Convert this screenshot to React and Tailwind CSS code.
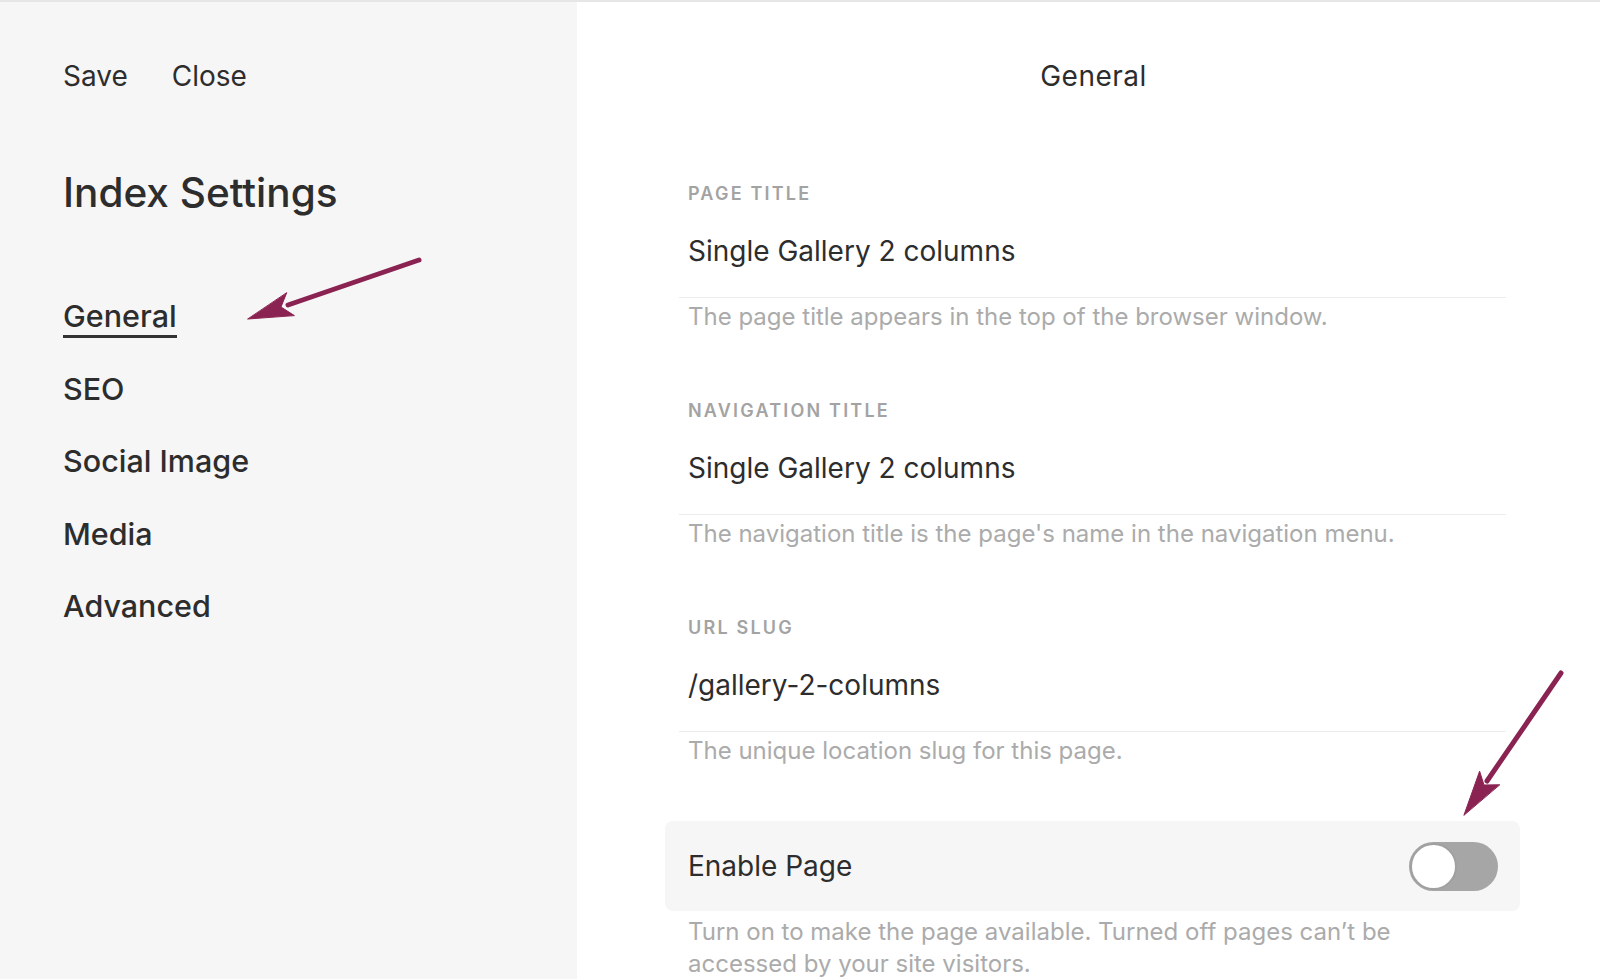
import React from "react";

const fields = [
  {
    label: "PAGE TITLE",
    value: "Single Gallery 2 columns",
    help: "The page title appears in the top of the browser window.",
  },
  {
    label: "NAVIGATION TITLE",
    value: "Single Gallery 2 columns",
    help: "The navigation title is the page's name in the navigation menu.",
  },
  {
    label: "URL SLUG",
    value: "/gallery-2-columns",
    help: "The unique location slug for this page.",
  },
];

const Arrows = () => (
  <svg
    className="pointer-events-none absolute inset-0"
    width="1600"
    height="979"
    viewBox="0 0 1600 979"
  >
    <g fill="#8b2352" stroke="#8b2352" strokeLinecap="round">
      <line x1="419" y1="258" x2="288" y2="303" strokeWidth="5" />
      <polygon points="248,317 294.4,313.6 281,305 286.6,291" strokeWidth="1" />
      <line x1="1561" y1="671" x2="1487" y2="779" strokeWidth="5" />
      <polygon points="1464,813 1479.6,769.2 1484,783 1499.4,782.8" strokeWidth="1" />
    </g>
  </svg>
);

const Toggle = () => (
  <div className="flex h-[49px] w-[89px] items-center rounded-full bg-[#a6a6a6] p-px">
    <div className="h-[47px] w-[47px] rounded-full border-2 border-[#a0a0a0] bg-white" />
  </div>
);

const App = () => {
  return (
    <div className="relative flex h-[979px] w-[1600px] overflow-hidden border-t-2 border-[#e6e6e6] bg-white font-['Inter',sans-serif] text-[#2d2d2d]">
      {/* sidebar */}
      <aside className="w-[577px] shrink-0 bg-[#f6f6f6] pl-[63px] pt-[58px]">
        <div className="flex gap-[44px] text-[28px] leading-[32px]">
          <span>Save</span>
          <span>Close</span>
        </div>
        <h1 className="mt-[77px] text-[40.5px] font-medium leading-[48px]">
          Index Settings
        </h1>
        <nav className="mt-[81px] flex flex-col items-start text-[30.5px] font-medium leading-[36px]">
          <span className="border-b-[3px] border-[#333] pb-[1px]">General</span>
          <span className="mt-[33px]">SEO</span>
          <span className="mt-[36px]">Social Image</span>
          <span className="mt-[37px]">Media</span>
          <span className="mt-[36px]">Advanced</span>
        </nav>
      </aside>

      {/* main panel */}
      <main className="flex-1 pt-[58px]">
        <h2 className="pl-[10px] text-center text-[28px] leading-[32px] tracking-[0.5px]">General</h2>
        <div className="ml-[88px] mt-[92px] w-[855px]">
          {fields.map((f, i) => (
            <div key={f.label} className={i > 0 ? "mx-[14px] mt-[70px]" : "mx-[14px]"}>
              <div className="pl-[9px] text-[18px] font-semibold leading-[20px] tracking-[2.2px] text-[#a3a3a3]">
                {f.label}
              </div>
              <div className="mt-[31px] border-b border-[#ececec] pb-[30px] pl-[9px] text-[28px] leading-[32px]">
                {f.value}
              </div>
              <p className="mt-[5px] pl-[9px] text-[24px] leading-[28px] text-[#ababab]">
                {f.help}
              </p>
            </div>
          ))}

          <div className="mt-[56px] flex h-[90px] items-center justify-between rounded-lg bg-[#f6f6f6] pl-[23px] pr-[22px]">
            <span className="text-[28px] leading-[32px]">Enable Page</span>
            <Toggle />
          </div>
          <p className="mt-[5px] pl-[23px] pr-[100px] text-[24px] leading-[32px] text-[#ababab]">
            Turn on to make the page available. Turned off pages can’t be accessed by your site visitors.
          </p>
        </div>
      </main>

      <Arrows />
    </div>
  );
};

export default App;
